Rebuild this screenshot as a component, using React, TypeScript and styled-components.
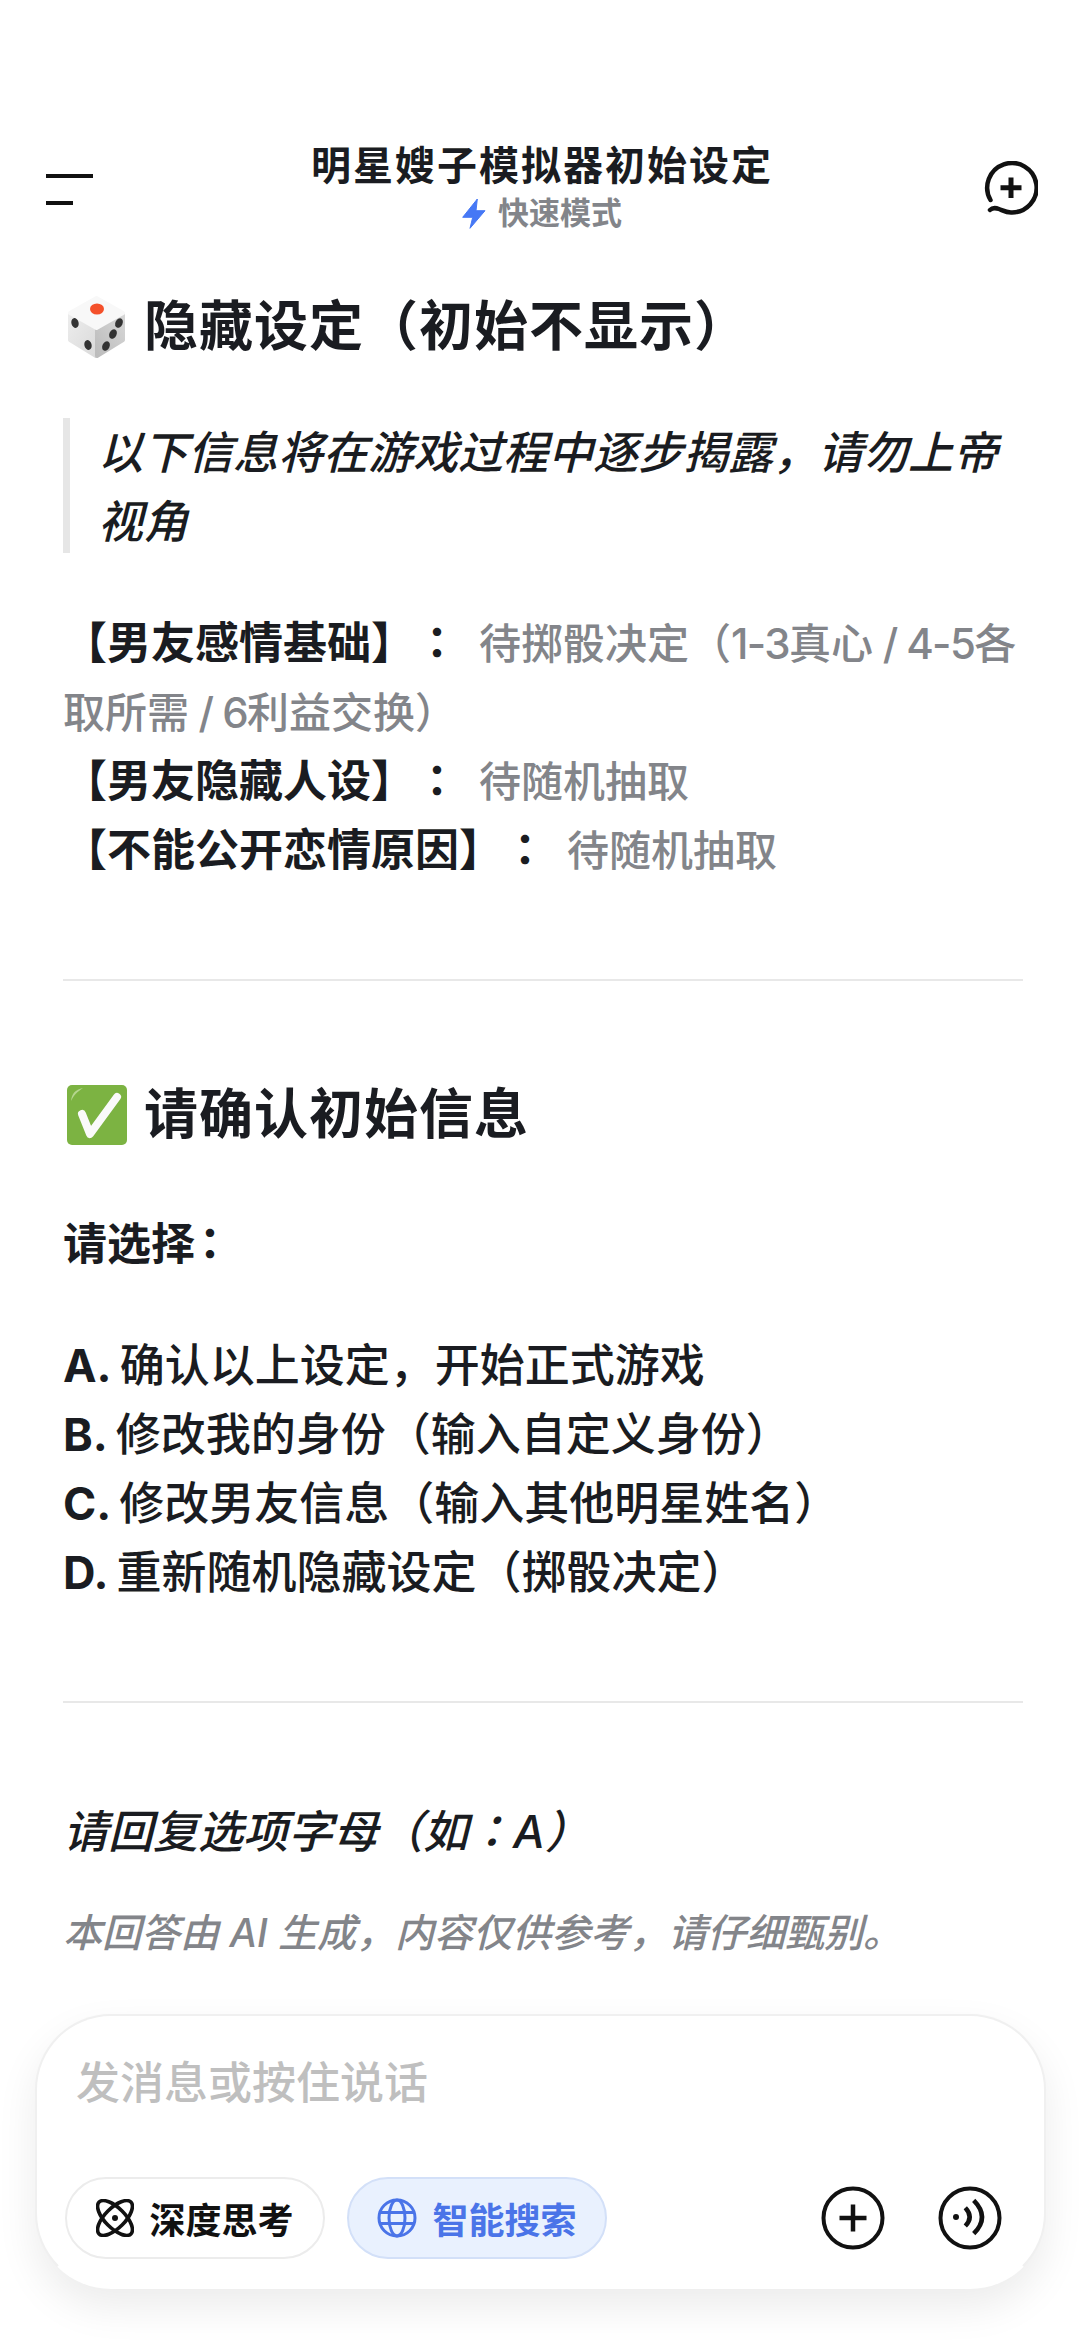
import styled, { createGlobalStyle } from 'styled-components';

const GlobalStyle = createGlobalStyle`
	html, body {
		margin: 0;
		padding: 0;
		background: #fff;
	}
	body {
		font-family: Inter, "Noto Sans CJK SC", sans-serif;
		color: #1a1c21;
		text-spacing-trim: space-all;
	}
`;

const Page = styled.div`
	width: 1080px;
	height: 2344px;
	display: flex;
	flex-direction: column;
	overflow: hidden;
	background: #fff;
`;

const Header = styled.header`
	display: grid;
	grid-template-columns: 1fr auto 1fr;
	align-items: center;
	height: 122px;
	margin-top: 128px;
	padding: 0 42px 0 46px;
`;

const MenuButton = styled.div`
	display: flex;
	flex-direction: column;
	align-items: flex-start;
	gap: 23px;
`;

const MenuLine = styled.span<{ $width: number }>`
	display: block;
	width: ${(p) => p.$width}px;
	height: 4px;
	background: #111;
`;

const TitleBlock = styled.div`
	display: flex;
	flex-direction: column;
	align-items: center;
	padding-bottom: 8px;
`;

const Title = styled.div`
	font-size: 40px;
	line-height: 58px;
	font-weight: 700;
	letter-spacing: 2px;
`;

const Mode = styled.div`
	display: flex;
	align-items: center;
	gap: 12px;
	font-size: 31px;
	line-height: 40px;
	font-weight: 700;
	color: #83858a;
	margin-top: -2px;
`;

const NewChat = styled.div`
	display: flex;
	justify-content: flex-end;
`;

const Content = styled.main`
	flex: 1;
	min-height: 0;
	padding: 0 57px 0 63px;
`;

const Heading = styled.h2<{ $top: number }>`
	display: flex;
	align-items: center;
	gap: 17px;
	margin: ${(p) => p.$top}px 0 0;
	font-size: 54px;
	line-height: 70px;
	font-weight: 700;
	letter-spacing: 1px;
`;

const Quote = styled.blockquote`
	margin: 56px 0 0;
	padding-left: 28px;
	border-left: 7px solid #e6e6e6;
	font-size: 45px;
	line-height: 69px;
	font-style: italic;
	font-weight: 500;
	height: 135px;
`;

const Settings = styled.div`
	margin-top: 56px;
	font-size: 42px;
	line-height: 69px;
	color: #83858a;
	font-weight: 500;
`;

const Label = styled.strong`
	color: #1a1c21;
	font-size: 44px;
	line-height: 1;
	font-weight: 700;
	margin-right: 20px;
`;

const Colon = styled.span<{ $shift?: number }>`
	font-family: "Noto Sans CJK TC", sans-serif;
	margin-left: ${(p) => p.$shift ?? 0}px;
`;

const Tight = styled.span`
	letter-spacing: -1.6px;
`;

const Rule = styled.hr<{ $top: number }>`
	margin: ${(p) => p.$top}px 0 0;
	border: 0;
	height: 2px;
	background: #e8e8e8;
`;

const Prompt = styled.div`
	margin-top: 61px;
	font-size: 44px;
	line-height: 60px;
	font-weight: 700;
`;

const Options = styled.div`
	margin-top: 57px;
	font-size: 45px;
	line-height: 69px;
	font-weight: 500;
`;

const OptionKey = styled.strong`
	font-weight: 700;
	margin-right: 8px;
`;

const ReplyHint = styled.div`
	margin-top: 96px;
	font-size: 45px;
	line-height: 60px;
	font-style: italic;
	font-weight: 500;
`;

const Disclaimer = styled.div`
	margin-top: 41px;
	font-size: 39px;
	line-height: 60px;
	font-style: italic;
	font-weight: 500;
	color: #83858a;
`;

const Composer = styled.footer`
	margin: 0 34px 55px 35px;
	height: 275px;
	box-sizing: border-box;
	padding: 37px 42px 28px 28px;
	display: flex;
	flex-direction: column;
	justify-content: space-between;
	background: #fff;
	border: 2px solid #f0f0f0;
	border-bottom-color: transparent;
	border-radius: 76px;
	box-shadow: 0 18px 40px rgba(0, 0, 0, 0.08);
`;

const Placeholder = styled.div`
	padding-left: 11px;
	font-size: 44px;
	line-height: 60px;
	font-weight: 500;
	color: #bfbfbf;
`;

const ComposerBar = styled.div`
	display: flex;
	align-items: center;
	gap: 22px;
`;

const Chip = styled.div<{ $active?: boolean }>`
	display: flex;
	align-items: center;
	justify-content: center;
	gap: 15px;
	width: ${(p) => (p.$active ? 260 : 260)}px;
	height: 82px;
	box-sizing: border-box;
	border-radius: 41px;
	border: 2px solid ${(p) => (p.$active ? '#d3e0f8' : '#ececec')};
	background: ${(p) => (p.$active ? '#e9f1fe' : '#fff')};
	color: ${(p) => (p.$active ? '#4a74e8' : '#111')};
	font-size: 36px;
	font-weight: 700;
`;

const RoundActions = styled.div`
	margin-left: auto;
	display: flex;
	gap: 53px;
`;

const Dice = () => (
	<svg width="64" height="64" viewBox="0 0 64 64">
		<defs>
			<linearGradient id="diceLeft" x1="0" y1="0" x2="1" y2="1">
				<stop offset="0" stopColor="#ececec" />
				<stop offset="1" stopColor="#dadada" />
			</linearGradient>
			<linearGradient id="diceRight" x1="1" y1="0" x2="0" y2="1">
				<stop offset="0" stopColor="#d6d6d6" />
				<stop offset="1" stopColor="#bcbcbc" />
			</linearGradient>
		</defs>
		<g strokeLinejoin="round" strokeWidth="4">
			<path d="M7 20 33 34V61L7 45Z" fill="url(#diceLeft)" stroke="url(#diceLeft)" />
			<path d="M60 20 34 34V61L60 45Z" fill="url(#diceRight)" stroke="url(#diceRight)" />
			<path d="M33.500 3 60 18 33.500 33 7 18Z" fill="#f8f8f8" stroke="#f8f8f8" />
		</g>
		<ellipse cx="34" cy="14" rx="7" ry="5.500" fill="#f4502a" />
		<ellipse cx="12" cy="28" rx="3.600" ry="5" fill="#333" transform="rotate(-15 12 28)" />
		<ellipse cx="25" cy="50" rx="3.600" ry="5" fill="#333" transform="rotate(-15 25 50)" />
		<ellipse cx="56" cy="28" rx="3.600" ry="5" fill="#333" transform="rotate(25 56 28)" />
		<ellipse cx="50" cy="39" rx="3.600" ry="5" fill="#333" transform="rotate(25 50 39)" />
		<ellipse cx="43" cy="51" rx="3.600" ry="5" fill="#333" transform="rotate(25 43 51)" />
	</svg>
);

const Check = () => (
	<svg width="64" height="62" viewBox="0 0 64 62">
		<rect x="4" y="1" width="60" height="60" rx="5" fill="#7cb342" />
		<path d="M8 17C9 9 12 6 20 4 14 8 11 11 8 17Z" fill="#b5d68f" />
		<path d="M19 30 27 50 54 13" fill="none" stroke="#fafafa" strokeWidth="8" strokeLinecap="round" strokeLinejoin="round" />
	</svg>
);

const Bolt = () => (
	<svg width="24" height="31" viewBox="0 0 24 31">
		<path d="M15.300 1 .7 19.300H10.700L8 30.300 23 12.700H14Z" fill="#4678f5" stroke="#4678f5" strokeLinejoin="round" />
	</svg>
);

const NewChatIcon = () => (
	<svg width="54" height="56" viewBox="0 0 54 56" fill="none" stroke="#111" strokeWidth="4.500" strokeLinecap="round">
		<path d="M6.500 39A24.700 24.700 0 1 1 27 51.400C22 51.400 19 49.500 15 48 11 46.500 8 47 6 49" />
		<path d="M27 16.500V37M16.500 26.700H37.500" strokeLinecap="butt" strokeWidth="5" />
	</svg>
);

const AtomIcon = () => (
	<svg width="38" height="38" viewBox="0 0 38 38" fill="none" stroke="#111" strokeWidth="3.600">
		<ellipse cx="19" cy="19" rx="10" ry="22.500" transform="rotate(-45 19 19)" />
		<ellipse cx="19" cy="19" rx="10" ry="22.500" transform="rotate(45 19 19)" />
		<circle cx="19" cy="19" r="3" fill="#111" stroke="none" />
	</svg>
);

const GlobeIcon = () => (
	<svg width="40" height="40" viewBox="0 0 40 40" fill="none" stroke="#4a74e8" strokeWidth="3">
		<circle cx="20" cy="20" r="18" />
		<ellipse cx="20" cy="20" rx="8" ry="18" />
		<path d="M2.500 14.500H37.500M2.500 25.500H37.500" />
	</svg>
);

const PlusCircle = () => (
	<svg width="64" height="64" viewBox="0 0 64 64" fill="none" stroke="#111" strokeWidth="4">
		<circle cx="32" cy="32" r="29.500" />
		<path d="M32 18.500V45.500M18.500 32H45.500" strokeWidth="4.500" />
	</svg>
);

const VoiceCircle = () => (
	<svg width="64" height="64" viewBox="0 0 64 64" fill="none" stroke="#111" strokeWidth="4">
		<circle cx="32" cy="32" r="29.500" />
		<circle cx="18" cy="31" r="3" fill="#111" stroke="none" />
		<path d="M27.300 21.700Q36 31 27.300 40M35.700 14.300Q52.300 31 35.700 47.700" strokeWidth="4.500" />
	</svg>
);

const App = () => {
	return (
		<Page>
			<GlobalStyle />
			<Header>
				<MenuButton>
					<MenuLine $width={47} />
					<MenuLine $width={27} />
				</MenuButton>
				<TitleBlock>
					<Title>明星嫂子模拟器初始设定</Title>
					<Mode>
						<Bolt />
						快速模式
					</Mode>
				</TitleBlock>
				<NewChat>
					<NewChatIcon />
				</NewChat>
			</Header>
			<Content>
				<Heading $top={42}>
					<Dice />
					隐藏设定（初始不显示）
				</Heading>
				<Quote>以下信息将在游戏过程中逐步揭露，请勿上帝视角</Quote>
				<Settings>
					<Label>【男友感情基础】<Colon>：</Colon></Label>
					待掷骰决定（<Tight>1-3</Tight>真心<Tight> / 4-5</Tight>各取所需<Tight> / 6</Tight>利益交换）
					<br />
					<Label>【男友隐藏人设】<Colon>：</Colon></Label>
					待随机抽取
					<br />
					<Label>【不能公开恋情原因】<Colon>：</Colon></Label>
					待随机抽取
				</Settings>
				<Rule $top={94} />
				<Heading $top={99}>
					<Check />
					请确认初始信息
				</Heading>
				<Prompt>请选择<Colon $shift={-7}>：</Colon></Prompt>
				<Options>
					<div><OptionKey>A.</OptionKey>确认以上设定，开始正式游戏</div>
					<div><OptionKey>B.</OptionKey>修改我的身份（输入自定义身份）</div>
					<div><OptionKey>C.</OptionKey>修改男友信息（输入其他明星姓名）</div>
					<div><OptionKey>D.</OptionKey>重新随机隐藏设定（掷骰决定）</div>
				</Options>
				<Rule $top={94} />
				<ReplyHint>请回复选项字母（如<Colon>：</Colon>A）</ReplyHint>
				<Disclaimer>本回答由 AI 生成，内容仅供参考，请仔细甄别。</Disclaimer>
			</Content>
			<Composer>
				<Placeholder>发消息或按住说话</Placeholder>
				<ComposerBar>
					<Chip>
						<AtomIcon />
						深度思考
					</Chip>
					<Chip $active>
						<GlobeIcon />
						智能搜索
					</Chip>
					<RoundActions>
						<PlusCircle />
						<VoiceCircle />
					</RoundActions>
				</ComposerBar>
			</Composer>
		</Page>
	);
};

export default App;
